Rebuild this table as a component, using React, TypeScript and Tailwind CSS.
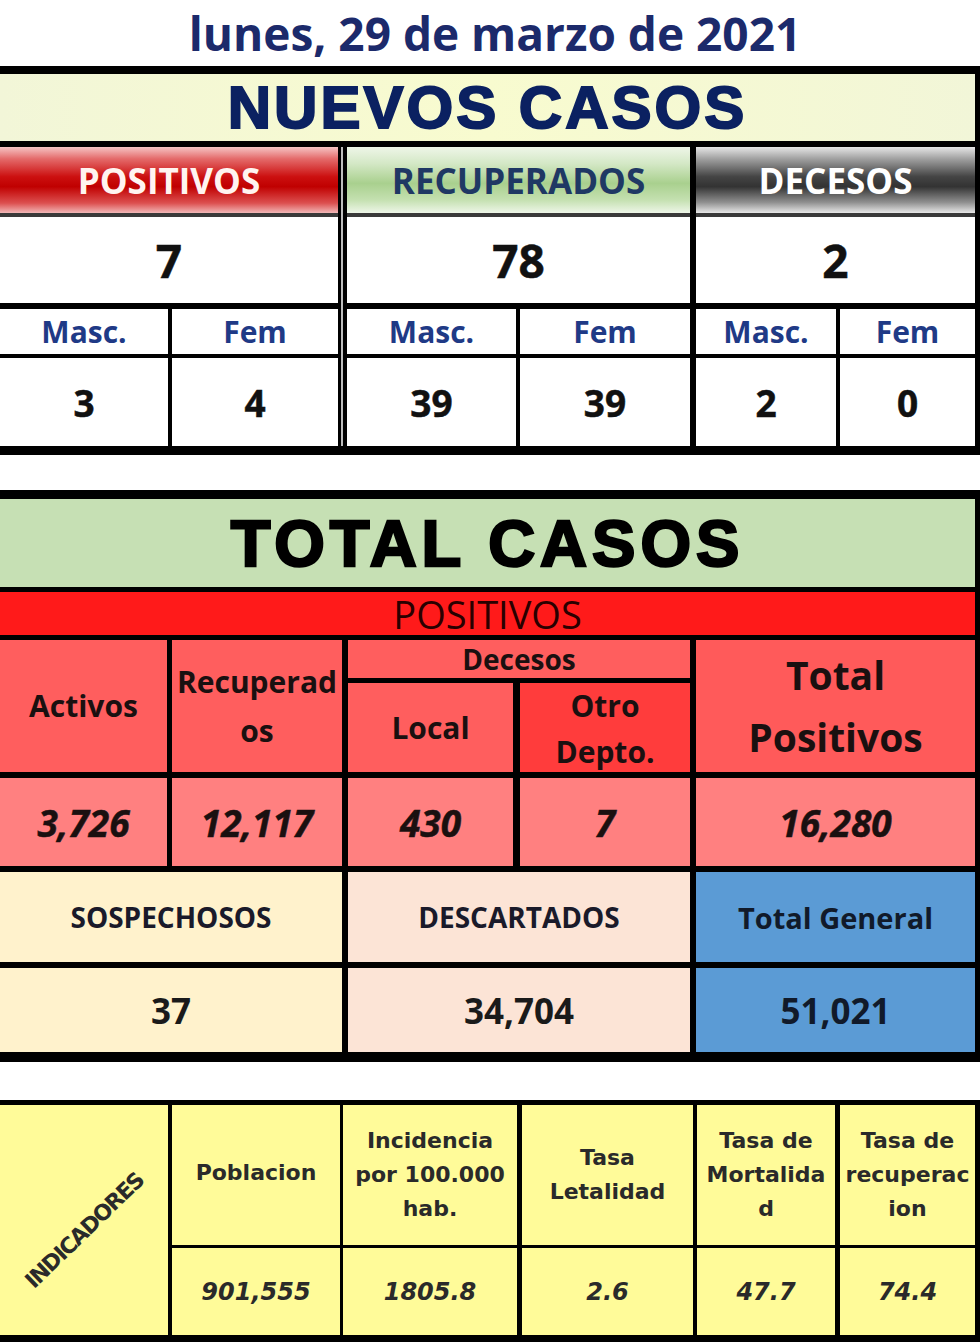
import React from "react";

const OS = "font-['Open_Sans',sans-serif]";
const DV = "font-['DejaVu_Sans',sans-serif]";
const LS = "font-['Liberation_Sans',Arial,sans-serif]";

function NuevosCol(props: {
  w: string;
  header: string;
  headerCls: string;
  total: string;
  masc: string;
  fem: string;
  mascW: string;
}) {
  return (
    <div className={`${props.w} flex flex-col`}>
      <div className={`h-[66px] flex items-center justify-center ${props.headerCls}`}>
        <span className={`${OS} text-[35px] font-bold leading-none`}>{props.header}</span>
      </div>
      <div className="h-[4px] bg-[#3a3a3a]" />
      <div className="h-[86px] bg-white flex items-center justify-center">
        <span className={`${OS} text-[46px] font-bold text-[#111] leading-none [-webkit-text-stroke:0.5px_#111]`}>{props.total}</span>
      </div>
      <div className="h-[6px] bg-black" />
      <div className="h-[45px] bg-white flex">
        <div className={`${props.mascW} border-r-[4px] border-black flex items-center justify-center`}>
          <span className={`${OS} text-[30px] font-bold text-[#1f3a86] leading-none`}>Masc.</span>
        </div>
        <div className="flex-1 flex items-center justify-center">
          <span className={`${OS} text-[30px] font-bold text-[#1f3a86] leading-none`}>Fem</span>
        </div>
      </div>
      <div className="h-[4px] bg-black" />
      <div className="h-[88px] bg-white flex">
        <div className={`${props.mascW} border-r-[4px] border-black flex items-center justify-center`}>
          <span className={`${OS} text-[37px] font-bold text-[#111] leading-none [-webkit-text-stroke:0.5px_#111]`}>{props.masc}</span>
        </div>
        <div className="flex-1 flex items-center justify-center">
          <span className={`${OS} text-[37px] font-bold text-[#111] leading-none [-webkit-text-stroke:0.5px_#111]`}>{props.fem}</span>
        </div>
      </div>
    </div>
  );
}

function RedHead(props: { w: string; bg: string; children: React.ReactNode; cls?: string }) {
  return (
    <div className={`${props.w} ${props.bg} border-r-black flex items-center justify-center text-center ${props.cls ?? ""}`}>
      {props.children}
    </div>
  );
}

export default function App() {
  const headTxt = `${OS} text-[30px] font-bold text-[#1a1010]`;
  const valTxt = `${OS} text-[37px] font-bold italic text-[#1a1010] leading-none [-webkit-text-stroke:0.5px_#1a1010]`;
  const indHead = `${DV} text-[22px] font-bold text-[#2a2a2a] leading-[34px] tracking-[0px]`;
  const indVal = `${DV} text-[24px] font-bold italic text-[#2a2a2a] leading-none`;
  return (
    <div className="w-[980px] h-[1342px] bg-white overflow-hidden">
      {/* Title */}
      <div className="h-[66px] flex items-center justify-center pl-[10px]">
        <span className={`${OS} text-[46px] font-bold text-[#1c2a6b] leading-none`}>
          lunes, 29 de marzo de 2021
        </span>
      </div>

      {/* NUEVOS CASOS */}
      <div className="w-[980px] border-t-[8px] border-b-[9px] border-r-[5px] border-black">
        <div className="h-[67px] bg-[linear-gradient(to_right,#f2f6d8,#f8fbcf_50%,#f2f6d8)] flex items-center justify-center">
          <span className={`${LS} text-[60px] font-bold text-[#0b2161] tracking-[3px] leading-none [-webkit-text-stroke:2px_#0b2161]`}>
            NUEVOS CASOS
          </span>
        </div>
        <div className="h-[6px] bg-black" />
        <div className="flex">
          <NuevosCol
            w="w-[338px]"
            header="POSITIVOS"
            headerCls="bg-[linear-gradient(to_bottom,#f6c4c4_0%,#e46a6a_18%,#cc1010_45%,#c00000_60%,#dc5050_85%,#f2b8b8_100%)] text-[#fff4f0]"
            total="7"
            masc="3"
            fem="4"
            mascW="w-[172px]"
          />
          <div className="w-[9px] flex">
            <div className="w-[3px] bg-black" />
            <div className="w-[2px] bg-[#bdbdbd]" />
            <div className="w-[4px] bg-black" />
          </div>
          <NuevosCol
            w="w-[343px]"
            header="RECUPERADOS"
            headerCls="bg-[linear-gradient(to_bottom,#eef6e8_0%,#d4e8c6_25%,#a9d08e_55%,#c4e0b0_80%,#eef6e8_100%)] text-[#1f3864]"
            total="78"
            masc="39"
            fem="39"
            mascW="w-[173px]"
          />
          <div className="w-[6px] bg-black" />
          <NuevosCol
            w="w-[279px]"
            header="DECESOS"
            headerCls="bg-[linear-gradient(to_bottom,#e6e6e6_0%,#a0a0a0_18%,#444_45%,#333_60%,#909090_84%,#e8e8e8_100%)] text-white"
            total="2"
            masc="2"
            fem="0"
            mascW="w-[144px]"
          />
        </div>
      </div>

      <div className="h-[35px]" />

      {/* TOTAL CASOS */}
      <div className="w-[980px] border-t-[9px] border-b-[10px] border-r-[5px] border-black">
        <div className="h-[88px] bg-[#c6e0b4] flex items-center justify-center">
          <span className={`${LS} text-[65px] font-bold text-black tracking-[5px] leading-none [-webkit-text-stroke:2.5px_#000]`}>
            TOTAL CASOS
          </span>
        </div>
        <div className="h-[5px] bg-black" />
        <div className="h-[43px] bg-[#ff1a1a] flex items-center justify-center">
          <span className={`${OS} text-[38px] text-[#2a0000] leading-none`}>POSITIVOS</span>
        </div>
        <div className="h-[5px] bg-black" />
        {/* header row */}
        <div className="flex h-[132px]">
          <RedHead w="w-[172px] border-r-[5px]" bg="bg-[#ff5e5e]">
            <span className={`${headTxt} leading-none`}>Activos</span>
          </RedHead>
          <RedHead w="w-[176px] border-r-[6px]" bg="bg-[#ff5e5e]">
            <span className={`${headTxt} leading-[49px]`}>
              Recuperad
              <br />
              os
            </span>
          </RedHead>
          <div className="w-[348px] border-r-[6px] border-black flex flex-col">
            <div className="h-[38px] bg-[#ff5e5e] flex items-center justify-center">
              <span className={`${OS} text-[28px] font-bold text-[#1a1010] leading-none`}>Decesos</span>
            </div>
            <div className="h-[5px] bg-black" />
            <div className="flex h-[89px]">
              <div className="w-[172px] border-r-[7px] border-black bg-[#ff5e5e] flex items-center justify-center">
                <span className={`${headTxt} leading-none`}>Local</span>
              </div>
              <div className="flex-1 bg-[#ff3c3c] flex items-start justify-center">
                <span className={`${headTxt} leading-[46px] text-center`}>
                  Otro
                  <br />
                  Depto.
                </span>
              </div>
            </div>
          </div>
          <div className="flex-1 bg-[#ff5a5a] flex items-center justify-center">
            <span className={`${OS} text-[39px] font-bold text-[#1a1010] leading-[62px] text-center`}>
              Total
              <br />
              Positivos
            </span>
          </div>
        </div>
        <div className="h-[6px] bg-black" />
        {/* values row */}
        <div className="flex h-[88px] bg-[#ff8080]">
          <div className="w-[172px] border-r-[5px] border-black flex items-center justify-center">
            <span className={valTxt}>3,726</span>
          </div>
          <div className="w-[176px] border-r-[6px] border-black flex items-center justify-center">
            <span className={valTxt}>12,117</span>
          </div>
          <div className="w-[172px] border-r-[7px] border-black flex items-center justify-center">
            <span className={valTxt}>430</span>
          </div>
          <div className="w-[176px] border-r-[6px] border-black flex items-center justify-center">
            <span className={valTxt}>7</span>
          </div>
          <div className="flex-1 flex items-center justify-center">
            <span className={valTxt}>16,280</span>
          </div>
        </div>
        <div className="h-[6px] bg-black" />
        {/* sospechosos */}
        <div className="flex h-[90px]">
          <div className="w-[348px] border-r-[6px] border-black bg-[#fff2cc] flex items-center justify-center">
            <span className={`${OS} text-[28px] font-bold text-[#1a1a2a] leading-none`}>SOSPECHOSOS</span>
          </div>
          <div className="w-[348px] border-r-[6px] border-black bg-[#fce4d6] flex items-center justify-center">
            <span className={`${OS} text-[28px] font-bold text-[#1a1a2a] leading-none`}>DESCARTADOS</span>
          </div>
          <div className="flex-1 bg-[#5b9bd5] flex items-center justify-center">
            <span className={`${OS} text-[29px] font-bold text-[#111a2a] leading-none`}>Total General</span>
          </div>
        </div>
        <div className="h-[6px] bg-black" />
        <div className="flex h-[84px]">
          <div className="w-[348px] border-r-[6px] border-black bg-[#fff2cc] flex items-center justify-center">
            <span className={`${OS} text-[35px] font-bold text-[#1a1a1a] leading-none`}>37</span>
          </div>
          <div className="w-[348px] border-r-[6px] border-black bg-[#fce4d6] flex items-center justify-center">
            <span className={`${OS} text-[35px] font-bold text-[#1a1a1a] leading-none`}>34,704</span>
          </div>
          <div className="flex-1 bg-[#5b9bd5] flex items-center justify-center">
            <span className={`${OS} text-[35px] font-bold text-[#111a2a] leading-none`}>51,021</span>
          </div>
        </div>
      </div>

      <div className="h-[38px]" />

      {/* INDICADORES */}
      <div className="w-[980px] h-[242px] border-t-[5px] border-b-[7px] border-r-[5px] border-black bg-[#fffb99] flex">
        <div className="w-[172px] border-r-[4px] border-black flex items-center justify-center overflow-hidden">
          <span className={`${DV} text-[22px] font-bold text-[#2a2a2a] tracking-[-1.5px] -rotate-[44deg] translate-y-[10px] whitespace-nowrap`}>
            INDICADORES
          </span>
        </div>
        <div className="flex-1 flex flex-col">
          <div className="h-[140px] flex">
            <div className="w-[171px] border-r-[3px] border-black flex items-center justify-center text-center">
              <span className={`${indHead} -translate-y-[2px]`}>Poblacion</span>
            </div>
            <div className="w-[179px] border-r-[5px] border-black flex items-center justify-center text-center">
              <span className={`${indHead} tracking-[-0.5px]`}>
                Incidencia
                <br />
                por 100.000
                <br />
                hab.
              </span>
            </div>
            <div className="w-[175px] border-r-[4px] border-black flex items-center justify-center text-center">
              <span className={indHead}>
                Tasa
                <br />
                Letalidad
              </span>
            </div>
            <div className="w-[143px] border-r-[5px] border-black flex items-center justify-center text-center">
              <span className={`${indHead} tracking-[-0.5px]`}>
                Tasa de
                <br />
                Mortalida
                <br />d
              </span>
            </div>
            <div className="flex-1 flex items-center justify-center text-center overflow-hidden">
              <span className={`${indHead} tracking-[-0.5px] whitespace-nowrap`}>
                Tasa de
                <br />
                recuperac
                <br />
                ion
              </span>
            </div>
          </div>
          <div className="h-[3px] bg-black" />
          <div className="flex-1 flex">
            <div className="w-[171px] border-r-[3px] border-black flex items-center justify-center">
              <span className={indVal}>901,555</span>
            </div>
            <div className="w-[179px] border-r-[5px] border-black flex items-center justify-center">
              <span className={indVal}>1805.8</span>
            </div>
            <div className="w-[175px] border-r-[4px] border-black flex items-center justify-center">
              <span className={indVal}>2.6</span>
            </div>
            <div className="w-[143px] border-r-[5px] border-black flex items-center justify-center">
              <span className={indVal}>47.7</span>
            </div>
            <div className="flex-1 flex items-center justify-center">
              <span className={indVal}>74.4</span>
            </div>
          </div>
        </div>
      </div>
    </div>
  );
}
